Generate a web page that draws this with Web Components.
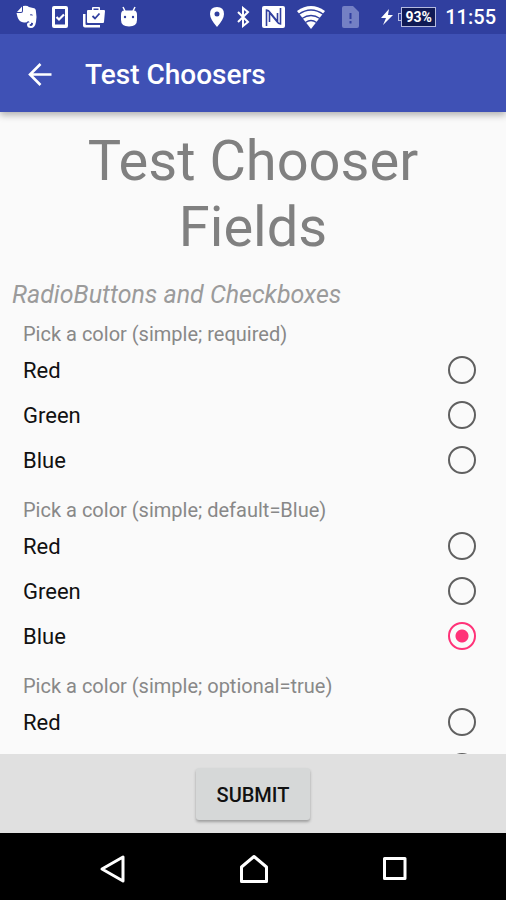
<!DOCTYPE html>
<html lang="en">
<head>
<meta charset="utf-8">
<meta name="viewport" content="width=device-width, initial-scale=1">
<title>Test Choosers</title>
<style>
html, body { margin: 0; height: 100%; }
body { font-family: Roboto, "Noto Sans", sans-serif; background: #fafafa; }
</style>
</head>
<body>
<app-screen>
  <status-bar slot="top"></status-bar>
  <app-bar slot="top">Test Choosers</app-bar>
  <form-title>Test Chooser Fields</form-title>
  <section-title>RadioButtons and Checkboxes</section-title>
  <radio-chooser options="Red,Green,Blue">Pick a color (simple; required)</radio-chooser>
  <radio-chooser options="Red,Green,Blue" value="Blue">Pick a color (simple; default=Blue)</radio-chooser>
  <radio-chooser options="Red,Green,Blue">Pick a color (simple; optional=true)</radio-chooser>
  <submit-bar slot="bottom">Submit</submit-bar>
  <system-nav slot="bottom"></system-nav>
</app-screen>
<script>
function define(name, html, setup) {
  const template = document.createElement('template');
  template.innerHTML = html;
  customElements.define(name, class extends HTMLElement {
    constructor() {
      super();
      this.attachShadow({ mode: 'open' }).append(template.content.cloneNode(true));
    }
    connectedCallback() {
      if (setup && !this.ready) { this.ready = true; setup(this, this.shadowRoot); }
    }
  });
}

define('app-screen', `
<style>
:host { display: flex; flex-direction: column; height: 100dvh; background: #fafafa; }
header { position: relative; z-index: 1; box-shadow: 0 3px 7px rgba(0,0,0,.3); }
main { flex: 1; min-height: 0; overflow-y: auto; scrollbar-width: none; padding: 16px 12px 0; }
</style>
<header><slot name="top"></slot></header>
<main><slot></slot></main>
<footer><slot name="bottom"></slot></footer>`);

define('status-bar', `
<style>
:host { display: flex; align-items: center; justify-content: space-between; height: 34px; padding: 0 10px 0 16px; background: #303f9f; color: #fff; }
.group { display: flex; align-items: center; }
.notices { gap: 15px; }
.system { gap: 12px; }
svg { display: block; fill: #fff; flex: none; }
.power { display: flex; align-items: center; gap: 5px; margin-left: 10px; }
.battery { display: flex; align-items: center; }
.battery::before { content: ""; width: 3px; height: 8px; box-sizing: border-box; border: 1px solid #b5bbe0; border-right: 0; }
.battery span { width: 35px; height: 20px; box-sizing: border-box; border: 1px solid #b5bbe0; background: #101a55; font: 700 14px/18px Roboto, sans-serif; text-align: center; }
time { margin-left: 4px; font: 500 20px/24px Roboto, sans-serif; }
</style>
<div class="group notices">
  <svg width="21" height="24" viewBox="0 0 21 24" aria-hidden="true"><path d="M1 7 6 1.500V6q0 1-1 1zM7 1q4-1 6 1l4 1q3 0 3 4 1 5 0 10-1 6-5 6-4 0-4-3.500 0-2.500 4-2.500v2q-1.500 0-1.500 1t1.500 1q2 0 2-3-3 0-5-2-1 2-4 1.500-5-.5-6.500-5.500L.5 8H5q2 0 2-2z"/><path d="M14 9.500q2-1 3 1l-3-.2z" fill="#303f9f"/></svg>
  <svg width="16" height="24" viewBox="0 0 16 24" aria-hidden="true"><path fill-rule="evenodd" d="M2 1h12q2 0 2 2v18q0 2-2 2H2q-2 0-2-2V3q0-2 2-2zm1 3v15.500h10V4z"/><path d="m4.500 12 2.500 2.500 5-5" fill="none" stroke="#fff" stroke-width="2.200"/></svg>
  <svg width="22" height="22" viewBox="0 0 22 22" aria-hidden="true"><path d="M0 8h2.500v10q0 1 1 1H17v2.500H2q-2 0-2-2z"/><path fill-rule="evenodd" d="M4 5q0-1 1-1h4V2q0-1 1-1h6q1 0 1 1v2h4q1 0 1 1l-1 11q0 1-1 1H5q-1 0-1-1zm6.500-2.500V4h5V2.500z"/><path d="m9.500 10 2.500 2.500L16.500 7.500" fill="none" stroke="#303f9f" stroke-width="1.800"/></svg>
  <svg width="18" height="22" viewBox="0 0 18 22" aria-hidden="true"><path d="m3 1 2 4M15 1l-2 4" stroke="#fff" stroke-width="1.500"/><path d="M1 9q0-4.500 3-4.500h10q3 0 3 4.500v5q0 6.500-8 6.500T1 14z"/><circle cx="5" cy="11" r="1.200" fill="#303f9f"/><circle cx="13" cy="11" r="1.200" fill="#303f9f"/></svg>
</div>
<div class="group system">
  <svg width="16" height="22" viewBox="0 0 16 22" aria-hidden="true"><path fill-rule="evenodd" d="M8 1q7 0 7 7 0 5-7 13Q1 13 1 8q0-7 7-7zm0 4.500a2.500 2.500 0 1 0 0 5 2.500 2.500 0 0 0 0-5z"/></svg>
  <svg width="13" height="22" viewBox="0 0 13 22" aria-hidden="true"><path d="m1 6 10 10-5 4V2l5 4L1 16" fill="none" stroke="#fff" stroke-width="2"/></svg>
  <svg width="23" height="24" viewBox="0 0 23 24" aria-hidden="true"><path d="M2 1h19q2 0 2 2v18q0 2-2 2H2q-2 0-2-2V3q0-2 2-2z"/><path d="M4.500 21V5q2 0 4 3l7 8.500V8M18.500 3v16q-2 0-4-3L7.500 7.500V17" fill="none" stroke="#303f9f" stroke-width="1.600"/></svg>
  <svg width="28" height="24" viewBox="0 0 28 24" aria-hidden="true"><path d="M0 6q14-10 28 0L14 24z"/><path d="M1.500 9.500q12.500-9 25 0M5 13.500q9-6 18 0M8.500 17.500q5.500-4 11 0" fill="none" stroke="#303f9f" stroke-width="1.300"/></svg>
  <svg width="17" height="24" viewBox="0 0 17 24" style="margin-left:5px" aria-hidden="true"><path d="M2 1h9l6 6v14q0 2-2 2H2q-2 0-2-2V3q0-2 2-2z" fill="#7480c4"/><path d="M8.500 8v6M8.500 16v2.500" stroke="#303f9f" stroke-width="2"/></svg>
  <div class="power">
    <svg width="12" height="18" viewBox="0 0 12 18" aria-hidden="true"><path d="M8 1 0 10h5l-3 7 10-10H7z"/></svg>
    <div class="battery"><span>93%</span></div>
    <time>11:55</time>
  </div>
</div>`);

define('app-bar', `
<style>
:host { display: flex; align-items: center; gap: 33px; height: 78px; box-sizing: border-box; padding: 4px 28px 0; background: #3f51b5; color: #fff; }
button { display: block; padding: 0; border: 0; background: none; }
svg { display: block; }
h1 { margin: 0; font: 500 28px/32px Roboto, sans-serif; }
</style>
<button type="button" aria-label="Back"><svg width="24" height="24" viewBox="0 0 24 24" fill="none" stroke="#fff" stroke-width="2.600"><path d="M23.500 11.500H3M12.500 1 2 11.500 12.500 22"/></svg></button>
<h1><slot></slot></h1>`);

define('form-title', `
<style>
:host { display: block; }
h2 { margin: 0; padding: 0 48px; color: #808080; text-align: center; font: 400 56px/66px Roboto, sans-serif; }
</style>
<h2><slot></slot></h2>`);

define('section-title', `
<style>
:host { display: block; padding: 19px 0 11px; }
h3 { margin: 0; color: #9b9b9b; font: italic 400 25px/32px Roboto, sans-serif; }
</style>
<h3><slot></slot></h3>`);

define('radio-chooser', `
<style>
:host { display: block; padding: 0 18px 16px 11px; }
fieldset { margin: 0; padding: 0; border: 0; min-width: 0; }
legend { padding: 0; color: #888; font: 400 20px/25px Roboto, sans-serif; }
label { display: flex; align-items: center; justify-content: space-between; height: 45px; color: #111; font: 400 22px/26px Roboto, sans-serif; }
span { padding-top: 3px; }
input { appearance: none; flex: none; width: 28px; height: 28px; margin: 0; border: 2px solid #606060; border-radius: 50%; }
input:checked { border-color: #ff3278; background: radial-gradient(circle, #ff3278 6px, transparent 7px); }
</style>
<fieldset><legend><slot></slot></legend></fieldset>`, (host, root) => {
  const fieldset = root.querySelector('fieldset');
  for (const option of host.getAttribute('options').split(',')) {
    const label = document.createElement('label');
    const text = document.createElement('span');
    const input = document.createElement('input');
    text.textContent = option;
    input.type = 'radio';
    input.name = 'choice';
    input.value = option;
    input.checked = option === host.getAttribute('value');
    label.append(text, input);
    fieldset.append(label);
  }
});

define('submit-bar', `
<style>
:host { display: flex; justify-content: center; padding: 14px 0 13px; background: #e0e0e0; }
button { height: 52px; padding: 1px 21px 0; border: 0; border-radius: 3px; background: #d6d8d8; color: #111; font: 500 20px/24px Roboto, sans-serif; text-transform: uppercase; box-shadow: 0 2px 3px rgba(0,0,0,.3); }
</style>
<button type="button"><slot></slot></button>`);

define('system-nav', `
<style>
:host { display: block; background: #000; }
nav { display: flex; justify-content: center; gap: 112px; height: 67px; align-items: center; padding: 4px 0 0 2px; box-sizing: border-box; }
button { display: block; padding: 0; border: 0; background: none; }
svg { display: block; fill: none; stroke: #fff; stroke-width: 3; stroke-linejoin: round; }
</style>
<nav>
<button type="button" aria-label="Back"><svg width="28" height="30" viewBox="0 0 28 30"><path d="M24 3v24L3 15z"/></svg></button>
<button type="button" aria-label="Home"><svg width="30" height="30" viewBox="0 0 30 30"><path d="M15 2.500 27.500 13v14.500h-25V13z"/></svg></button>
<button type="button" aria-label="Recent apps"><svg width="28" height="30" viewBox="0 0 28 30"><path d="M3.500 4.500h20.500v20H3.500z"/></svg></button>
</nav>`);
</script>
</body>
</html>
